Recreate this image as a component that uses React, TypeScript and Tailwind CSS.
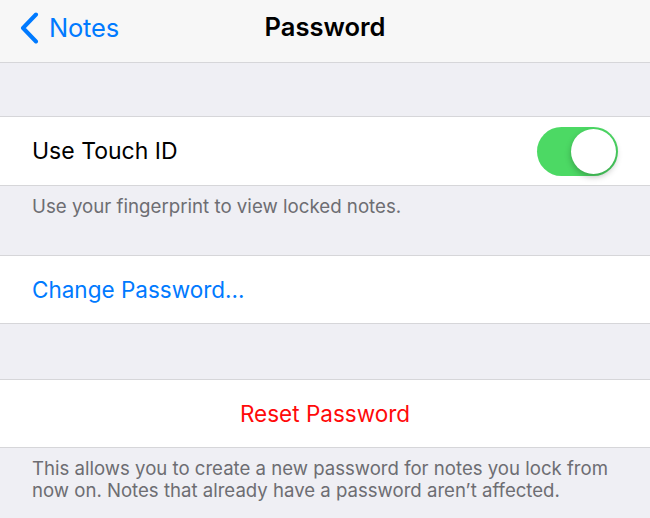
import React from 'react';

const Toggle = () => (
    <div className="relative w-[81px] h-[49px] rounded-full bg-[#4cd964]">
        <div className="absolute right-[2px] top-[2px] w-[45px] h-[45px] rounded-full bg-white shadow-[0_3px_6px_rgba(0,0,0,0.25)]" />
    </div>
);

const App = () => {
    return (
        <div className="w-[650px] h-[518px] overflow-hidden bg-[#efeff4] font-['Inter','Liberation_Sans',sans-serif]">
            {/* Nav bar */}
            <div className="relative h-[63px] bg-[#f7f7f7] border-b border-[#d6d6d9] flex items-center pb-[7px]">
                <div className="flex items-center pl-[19px] text-[#007aff]">
                    <svg width="21" height="32" viewBox="0 0 21 32" fill="none">
                        <path d="M17 2.5 L4 16 L17 29.5" stroke="#007aff" strokeWidth="4" strokeLinecap="round" strokeLinejoin="round" />
                    </svg>
                    <span className="ml-[9px] text-[25.5px] tracking-[-0.2px] leading-none">Notes</span>
                </div>
                <div className="absolute inset-0 flex items-center justify-center pb-[8px] pointer-events-none">
                    <span className="text-[25.5px] font-semibold text-black leading-none">Password</span>
                </div>
            </div>

            <div className="h-[53px]" />

            {/* Touch ID */}
            <div className="h-[70px] bg-white border-y border-[#d6d6d9] flex items-center justify-between pl-[32px] pr-[32px]">
                <span className="text-[23px] text-black">Use Touch ID</span>
                <Toggle />
            </div>
            <div className="h-[69px] pl-[32px] pt-[7px]">
                <span className="text-[18.7px] text-[#6d6d72]">Use your fingerprint to view locked notes.</span>
            </div>

            {/* Change password */}
            <div className="h-[69px] bg-white border-y border-[#d6d6d9] flex items-center pl-[32px]">
                <span className="text-[22.5px] text-[#007aff]">Change Password...</span>
            </div>

            <div className="h-[55px]" />

            {/* Reset */}
            <div className="h-[69px] bg-white border-y border-[#d6d6d9] flex items-center justify-center">
                <span className="text-[22.5px] text-[#ff0a0a]">Reset Password</span>
            </div>
            <div className="pl-[32px] pr-[20px] pt-[9px] text-[18.6px] leading-[22px] text-[#6d6d72]">
                This allows you to create a new password for notes you lock from now on. Notes that already have a password aren’t affected.
            </div>
        </div>
    );
};

export default App;
